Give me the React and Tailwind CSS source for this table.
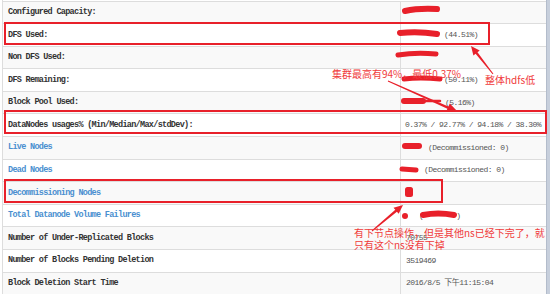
import React from "react";

const rows = [
  { label: "Configured Capacity:", value: "", pad: "pl-1" },
  { label: "DFS Used:", value: "(44.51%)", pad: "pl-[43px]" },
  { label: "Non DFS Used:", value: "", pad: "pl-1" },
  { label: "DFS Remaining:", value: "(50.11%)", pad: "pl-[43px]" },
  { label: "Block Pool Used:", value: "(5.16%)", pad: "pl-[44px]" },
  { label: "DataNodes usages% (Min/Median/Max/stdDev):", value: "0.37% / 92.77% / 94.18% / 38.30%", pad: "pl-1" },
  { label: "Live Nodes", link: true, value: "(Decommissioned: 0)", pad: "pl-[27px]" },
  { label: "Dead Nodes", link: true, value: "(Decommissioned: 0)", pad: "pl-[23px]" },
  { label: "Decommissioning Nodes", link: true, value: "", pad: "pl-1" },
  { label: "Total Datanode Volume Failures", link: true, value: "total", pad: "pl-[18px]" },
  { label: "Number of Under-Replicated Blocks", value: "70755", pad: "pl-[5px]" },
  { label: "Number of Blocks Pending Deletion", value: "3519469", pad: "pl-[5px]" },
  { label: "Block Deletion Start Time", value: "2016/8/5 下午11:15:04", pad: "pl-[5px]" },
];

function arrowPoints(x1, y1, x2, y2, w0, w1, L, W) {
  const dx = x2 - x1;
  const dy = y2 - y1;
  const len = Math.hypot(dx, dy);
  const ux = dx / len;
  const uy = dy / len;
  const nx = -uy;
  const ny = ux;
  const bx = x2 - ux * L;
  const by = y2 - uy * L;
  const p = [
    [x1 + (nx * w0) / 2, y1 + (ny * w0) / 2],
    [bx + (nx * w1) / 2, by + (ny * w1) / 2],
    [bx + (nx * W) / 2, by + (ny * W) / 2],
    [x2, y2],
    [bx - (nx * W) / 2, by - (ny * W) / 2],
    [bx - (nx * w1) / 2, by - (ny * w1) / 2],
    [x1 - (nx * w0) / 2, y1 - (ny * w0) / 2],
  ];
  return p.map((q) => q[0].toFixed(1) + "," + q[1].toFixed(1)).join(" ");
}

const RED = "#e8202a";

export default function App() {
  return (
    <div className="relative w-[550px] h-[294px] overflow-hidden bg-white">
      <div className="flex h-full">
        <div className="w-[2px] shrink-0 bg-white" />
        <div className="w-[544px] shrink-0 border-l border-[#dddddd] pt-[0.6px]">
          {rows.map((r, i) => (
            <div
              key={i}
              className={
                "flex h-[22.58px] border-t border-[#dddddd] " +
                (i % 2 === 0 ? "bg-[#f9f9f9]" : "bg-white")
              }
            >
              <div
                className={
                  "w-[398px] shrink-0 flex items-center pl-[5px] border-r border-[#dddddd] font-bold text-[8.5px] tracking-[-0.7px] whitespace-nowrap [font-family:'Liberation_Mono','Noto_Sans_CJK_SC',monospace] " +
                  (r.link ? "text-[#4a8fd0]" : "text-[#333333]")
                }
              >
                {r.label}
              </div>
              <div
                className={
                  "flex-1 flex items-center whitespace-nowrap text-[8px] tracking-[-0.55px] text-[#555555] [font-family:'Liberation_Mono','Noto_Sans_CJK_SC',monospace] " +
                  r.pad
                }
              >
                {r.value === "total" ? (
                  <span className="flex">
                    <span>(</span>
                    <span className="w-[33px]" />
                    <span>)</span>
                  </span>
                ) : (
                  r.value
                )}
              </div>
            </div>
          ))}
        </div>
        <div className="w-[4px] shrink-0 bg-[#c7cfdc] border-l border-[#b3bccb]" />
      </div>

      {/* annotation boxes */}
      <div className="absolute left-[4px] top-[22px] w-[486px] h-[23px] border-2 border-[#e8202a]" />
      <div className="absolute left-[4px] top-[110px] w-[543px] h-[24px] border-2 border-[#e8202a]" />
      <div className="absolute left-[4px] top-[179px] w-[439px] h-[24px] border-2 border-[#e8202a]" />

      {/* redactions and arrows */}
      <svg className="absolute left-0 top-0" width="550" height="294" viewBox="0 0 550 294">
        <g stroke={RED} strokeLinecap="round" fill="none">
          <path d="M405 11 Q418 8 437 9" strokeWidth="6" />
          <path d="M400 33 Q418 31 437 34" strokeWidth="6" />
          <path d="M398 55 Q416 52 436 54" strokeWidth="5" />
          <path d="M404 79 Q420 77 440 79" strokeWidth="5" />
          <path d="M404 101 L423 101" strokeWidth="6" />
          <path d="M423 101 L440 101" strokeWidth="2.5" />
          <path d="M405 146 L419 146" strokeWidth="6" />
          <path d="M402 169 L416 170" strokeWidth="5" />
          <path d="M423 215 Q438 212 454 215" strokeWidth="6" />
        </g>
        <rect x="405" y="187" width="8" height="10" rx="2.5" fill={RED} />
        <circle cx="405" cy="216" r="3" fill={RED} />
        <polygon points={arrowPoints(493, 74, 471, 46, 1, 2.5, 9, 8)} fill={RED} />
        <polygon points={arrowPoints(388, 81, 458, 112, 1, 2.5, 11, 9)} fill={RED} />
        <polygon points={arrowPoints(372, 231, 403, 205, 1, 2.5, 9, 8)} fill={RED} />
      </svg>

      {/* annotation texts */}
      <div className="absolute left-[485px] top-[73px] text-[10px] leading-[14px] text-[#f03a3a] whitespace-nowrap [font-family:'Noto_Sans_CJK_SC',sans-serif]">
        整体hdfs低
      </div>
      <div className="absolute left-[332px] top-[67px] text-[10px] leading-[14px] text-[#f03a3a] whitespace-nowrap [font-family:'Noto_Sans_CJK_SC',sans-serif]">
        集群最高有94%，最低0.37%
      </div>
      <div className="absolute left-[354px] top-[227px] text-[10px] leading-[12px] text-[#f03a3a] whitespace-nowrap [font-family:'Noto_Sans_CJK_SC',sans-serif]">
        <div>有下节点操作，但是其他ns已经下完了，就</div>
        <div>只有这个ns没有下掉</div>
      </div>
    </div>
  );
}
